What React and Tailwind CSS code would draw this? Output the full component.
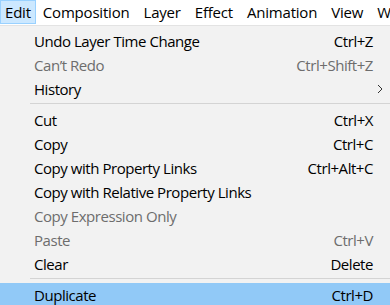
import React from "react";

const menuBar = ["Edit", "Composition", "Layer", "Effect", "Animation", "View", "Window"];

// menu rows; "sep" draws a divider line
const items = [
  { label: "Undo Layer Time Change", shortcut: "Ctrl+Z" },
  { label: "Can\u2019t Redo", shortcut: "Ctrl+Shift+Z", disabled: true },
  { label: "History", submenu: true },
  "sep",
  { label: "Cut", shortcut: "Ctrl+X" },
  { label: "Copy", shortcut: "Ctrl+C" },
  { label: "Copy with Property Links", shortcut: "Ctrl+Alt+C" },
  { label: "Copy with Relative Property Links" },
  { label: "Copy Expression Only", disabled: true },
  { label: "Paste", shortcut: "Ctrl+V", disabled: true },
  { label: "Clear", shortcut: "Delete" },
  "sep",
  { label: "Duplicate", shortcut: "Ctrl+D", active: true },
];

export default function App() {
  return (
    <div
      className="w-[390px] h-[305px] overflow-hidden bg-[#f2f2f2] text-[15px] tracking-[-0.45px] text-black"
      style={{ fontFamily: '"Open Sans", "Noto Sans", sans-serif' }}
    >
      {/* Menu bar */}
      <div className="flex h-[25px] bg-white whitespace-nowrap tracking-[-0.2px]">
        {menuBar.map((name, i) => (
          <div
            key={name}
            className={`h-[24px] flex items-center pt-px leading-none ${
              i === 0 ? "bg-[#cce8ff] border border-[#99d1ff] px-[4px]" : "px-[7px]"
            }`}
          >
            {name}
          </div>
        ))}
      </div>

      {/* Dropdown */}
      <div className="border-t border-[#e3e3e3] pt-[3px]">
        {items.map((item, i) =>
          item === "sep" ? (
            <div key={i} className="h-[7px] pl-[30px] pt-[2px]">
              <div className="h-px bg-[#d4d4d4]" />
            </div>
          ) : (
            <div
              key={i}
              className={`flex items-center h-[24px] pl-[34px] pr-[17px] whitespace-nowrap ${
                item.active ? "bg-[#91c9f7]" : ""
              } ${item.disabled ? "text-[#6d6d6d]" : ""}`}
            >
              <span className="flex-1">{item.label}</span>
              {item.shortcut && <span>{item.shortcut}</span>}
              {item.submenu && (
                <svg width="6" height="10" viewBox="0 0 6 10" className="mr-[-10px]">
                  <path d="M1 1l4 4-4 4" fill="none" stroke="#333" strokeWidth="1" />
                </svg>
              )}
            </div>
          )
        )}
      </div>
    </div>
  );
}
